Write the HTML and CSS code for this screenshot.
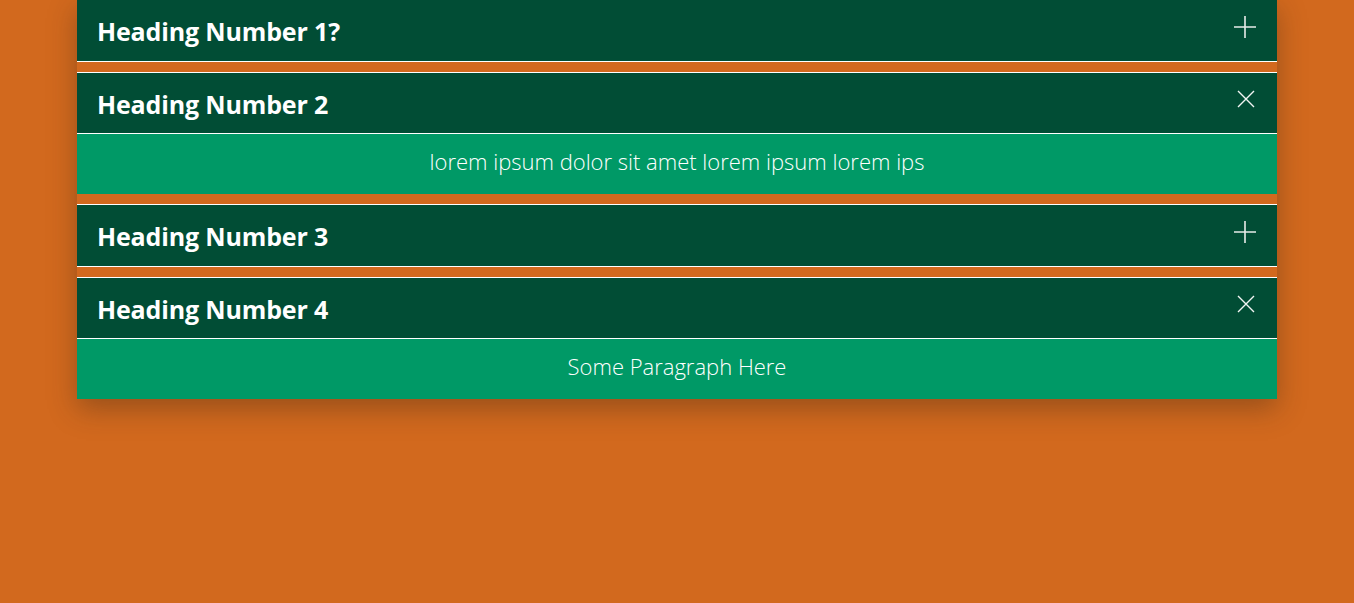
FILE: index.html
```html
<!DOCTYPE html>
<html lang="en">
<head>
<meta charset="utf-8">
<title>Accordion</title>
<link rel="stylesheet" href="styles.css">
</head>
<body>
<div class="accordion">
  <div class="item first">
    <div class="header">
      <h3 class="title">Heading Number 1?</h3>
      <svg class="icon plus" width="22" height="22" viewBox="0 0 22 22"><path d="M11 0V22M0 11H22" stroke="#e8ece9" stroke-width="1.6" fill="none"/></svg>
    </div>
  </div>
  <div class="item">
    <div class="header">
      <h3 class="title">Heading Number 2</h3>
      <svg class="icon cross" width="22" height="22" viewBox="0 0 22 22"><path d="M3 3L19 19M19 3L3 19" stroke="#f2f5f3" stroke-width="1.4" fill="none"/></svg>
    </div>
    <div class="content">lorem ipsum dolor sit amet lorem ipsum lorem ips</div>
  </div>
  <div class="item">
    <div class="header">
      <h3 class="title">Heading Number 3</h3>
      <svg class="icon plus" width="22" height="22" viewBox="0 0 22 22"><path d="M11 0V22M0 11H22" stroke="#e8ece9" stroke-width="1.6" fill="none"/></svg>
    </div>
  </div>
  <div class="item">
    <div class="header">
      <h3 class="title">Heading Number 4</h3>
      <svg class="icon cross" width="22" height="22" viewBox="0 0 22 22"><path d="M3 3L19 19M19 3L3 19" stroke="#f2f5f3" stroke-width="1.4" fill="none"/></svg>
    </div>
    <div class="content">Some Paragraph Here</div>
  </div>
</div>
</body>
</html>
```
FILE: styles.css
```css
html, body {
  margin: 0;
  padding: 0;
  background: #d2691e;
  height: 100%;
}
body {
  font-family: "Open Sans", "Noto Sans", sans-serif;
}
.accordion {
  width: 1200px;
  margin: -1px auto 0;
  display: flex;
  flex-direction: column;
  gap: 10px;
  box-shadow: 0 10px 26px rgba(60, 40, 20, 0.38);
}
.item {
  display: flex;
  flex-direction: column;
}
.header {
  position: relative;
  height: 60.5px;
  background: #014d35;
  border-top: 1px solid #ffffff;
  border-bottom: 1px solid #ffffff;
  display: flex;
  align-items: center;
  padding: 0 20px;
}
.title {
  margin: 0;
  padding-top: 2px;
  color: #ffffff;
  font-size: 25px;
  font-weight: 700;
  letter-spacing: -0.15px;
}
.icon {
  position: absolute;
  right: 21px;
  top: 16px;
}
.cross {
  top: 15px;
  right: 20px;
}
.content {
  height: 60px;
  background: #009966;
  color: #ffffff;
  font-size: 22px;
  font-weight: 300;
  display: flex;
  align-items: center;
  justify-content: center;
  padding-bottom: 6px;
  box-sizing: border-box;
}
```
